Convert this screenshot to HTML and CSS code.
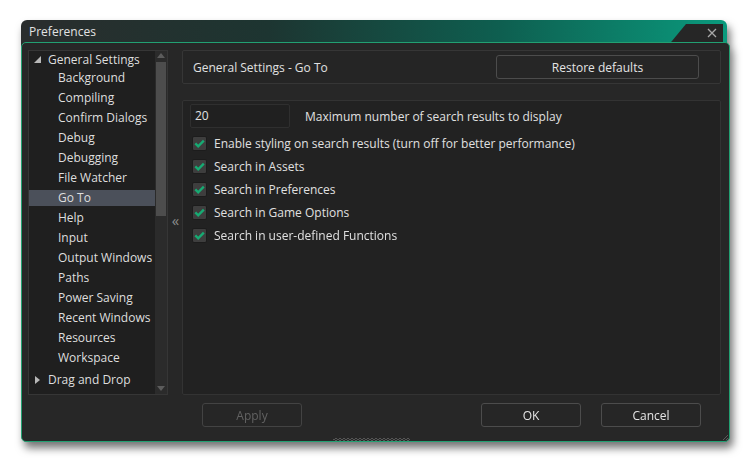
FILE: index.html
```html
<!DOCTYPE html>
<html>
<head>
<meta charset="utf-8">
<link rel="stylesheet" href="styles.css">
</head>
<body>
<div class="window">
  <div class="titlebar">
    <span class="title">Preferences</span>
    <div class="closetab">
      <svg class="close-x" width="10" height="10" viewBox="0 0 10 10"><path d="M1 1 L9 9 M9 1 L1 9" stroke="#a8a8a8" stroke-width="1.3" fill="none"/></svg>
    </div>
  </div>
  <div class="frame">
    <div class="main">
      <div class="tree">
        <ul class="tree-list">
          <li class="row top first"><span class="tri tri-open"></span>General Settings</li>
          <li class="row child">Background</li>
          <li class="row child">Compiling</li>
          <li class="row child">Confirm Dialogs</li>
          <li class="row child">Debug</li>
          <li class="row child">Debugging</li>
          <li class="row child">File Watcher</li>
          <li class="row child selected">Go To</li>
          <li class="row child">Help</li>
          <li class="row child">Input</li>
          <li class="row child">Output Windows</li>
          <li class="row child">Paths</li>
          <li class="row child">Power Saving</li>
          <li class="row child">Recent Windows</li>
          <li class="row child">Resources</li>
          <li class="row child">Workspace</li>
          <li class="row top last"><span class="tri tri-closed"></span>Drag and Drop</li>
        </ul>
        <div class="scrollbar">
          <span class="arrow arrow-up"></span>
          <div class="thumb"></div>
          <span class="arrow arrow-down"></span>
        </div>
      </div>
      <div class="collapse">«</div>
      <div class="content-col">
        <div class="header-box">
          <span class="header-title">General Settings - Go To</span>
          <button class="btn restore">Restore defaults</button>
        </div>
        <div class="settings-box">
          <div class="num-row">
            <div class="num-input">20</div>
            <span class="label">Maximum number of search results to display</span>
          </div>
          <div class="check-row"><span class="checkbox"><svg width="13" height="13" viewBox="0 0 13 13"><path d="M2.3 6.4 L5.2 9.3 L10.8 3.7" stroke="#17ab73" stroke-width="2.4" fill="none"/></svg></span>Enable styling on search results (turn off for better performance)</div>
          <div class="check-row"><span class="checkbox"><svg width="13" height="13" viewBox="0 0 13 13"><path d="M2.3 6.4 L5.2 9.3 L10.8 3.7" stroke="#17ab73" stroke-width="2.4" fill="none"/></svg></span>Search in Assets</div>
          <div class="check-row"><span class="checkbox"><svg width="13" height="13" viewBox="0 0 13 13"><path d="M2.3 6.4 L5.2 9.3 L10.8 3.7" stroke="#17ab73" stroke-width="2.4" fill="none"/></svg></span>Search in Preferences</div>
          <div class="check-row"><span class="checkbox"><svg width="13" height="13" viewBox="0 0 13 13"><path d="M2.3 6.4 L5.2 9.3 L10.8 3.7" stroke="#17ab73" stroke-width="2.4" fill="none"/></svg></span>Search in Game Options</div>
          <div class="check-row"><span class="checkbox"><svg width="13" height="13" viewBox="0 0 13 13"><path d="M2.3 6.4 L5.2 9.3 L10.8 3.7" stroke="#17ab73" stroke-width="2.4" fill="none"/></svg></span>Search in user-defined Functions</div>
        </div>
      </div>
    </div>
    <div class="footer">
      <button class="btn btn-disabled">Apply</button>
      <div class="spacer"></div>
      <button class="btn">OK</button>
      <button class="btn">Cancel</button>
    </div>
    <div class="bottom">
      <div class="grip"></div>
      <svg class="corner" width="8" height="8" viewBox="0 0 8 8"><path d="M7 2 L2 7 M7 5 L5 7" stroke="#5a5a5a" stroke-width="1" fill="none"/></svg>
    </div>
  </div>
</div>
</body>
</html>
```
FILE: styles.css
```css
* { box-sizing: border-box; }
html, body { margin: 0; padding: 0; background: #ffffff; }
html { height: 469px; }
body {
  min-height: 469px;
  padding: 20px 0 0 21px;
  font-family: "Open Sans", "Noto Sans", sans-serif;
  font-size: 12px;
  color: #dcdcdc;
}
.window {
  width: 709px;
  filter: drop-shadow(3px 6px 4px rgba(0,0,0,0.55));
}
.titlebar {
  width: 706px;
  height: 27px;
  border-radius: 6px 6px 0 0;
  background: linear-gradient(90deg, #2a2d2d 0%, #1d3531 35%, #0e5f50 68%, #0a9a7d 100%);
  display: flex;
  align-items: flex-start;
}
.title {
  padding: 1px 0 0 8px;
  height: 22px;
  line-height: 22px;
  font-size: 12px;
  color: #e2e2e2;
}
.closetab {
  margin-left: auto;
  margin-top: 4px;
  margin-right: 4px;
  width: 56px;
  height: 23px;
  background: #262626;
  clip-path: polygon(19px 0, 100% 0, 100% 100%, 0 100%);
  display: flex;
  justify-content: flex-end;
  padding: 4px 6px 0 0;
}
.close-x { display: block; }
.frame {
  position: relative;
  margin-top: -5px;
  width: 709px;
  height: 400px;
  background: #272727;
  border: 1px solid #22a072;
  border-radius: 5px;
  padding: 7px 8px 0 6px;
  display: flex;
  flex-direction: column;
}
.main {
  display: flex;
  height: 345px;
}
.tree {
  width: 140px;
  height: 345px;
  background: #1f1f1f;
  border: 1px solid #363636;
  display: flex;
}
.tree-list {
  list-style: none;
  margin: 0;
  padding: 0;
  width: 126px;
}
.row {
  height: 20px;
  line-height: 20px;
  white-space: nowrap;
  color: #dedede;
}
.row.first { height: 17px; line-height: 17px; }
.row.last { margin-top: 2px; }
.row.top { padding-left: 5px; display: flex; align-items: center; }
.row.child { padding-left: 29px; }
.row.selected {
  background: linear-gradient(#4b505a, #4b505a) 0 2px / 100% 16px no-repeat;
}
.tri { display: inline-block; width: 0; height: 0; }
.tri-open {
  border-left: 7px solid transparent;
  border-bottom: 7px solid #b8b8b8;
  margin-right: 7px;
  margin-top: -1px;
}
.tri-closed {
  border-left: 5px solid #b8b8b8;
  border-top: 4px solid transparent;
  border-bottom: 4px solid transparent;
  margin-left: 1px;
  margin-right: 8px;
}
.scrollbar {
  width: 12px;
  margin-left: auto;
  background: #2b2b2b;
  display: flex;
  flex-direction: column;
  align-items: center;
  padding-top: 2px;
}
.arrow { width: 0; height: 0; display: block; }
.arrow-up {
  border-left: 4px solid transparent;
  border-right: 4px solid transparent;
  border-bottom: 5px solid #5c5c5c;
}
.arrow-down {
  margin-top: auto;
  margin-bottom: 3px;
  border-left: 4px solid transparent;
  border-right: 4px solid transparent;
  border-top: 5px solid #5c5c5c;
}
.thumb {
  margin-top: 4px;
  width: 10px;
  height: 154px;
  background: #4d4d4d;
}
.collapse {
  width: 14px;
  text-align: center;
  color: #8c8c8c;
  font-size: 15px;
  padding-top: 160px;
  padding-left: 1px;
}
.content-col {
  width: 539px;
  display: flex;
  flex-direction: column;
  gap: 16px;
}
.header-box {
  height: 34px;
  background: #252525;
  border: 1px solid #363636;
  border-radius: 2px;
  display: flex;
  align-items: center;
  padding: 0 21px 0 10px;
}
.header-title { color: #e0e0e0; }
.btn {
  font-family: "Open Sans", "Noto Sans", sans-serif;
  font-size: 12px;
  color: #e4e4e4;
  background: #262626;
  border: 1px solid #4c4c4c;
  border-radius: 3px;
  height: 24px;
  width: 100px;
  padding: 0;
}
.restore { margin-left: auto; width: 203px; }
.settings-box {
  height: 295px;
  background: #222222;
  border: 1px solid #333333;
  border-radius: 2px;
  padding: 3px 0 0 7px;
}
.num-row {
  display: flex;
  align-items: center;
  margin-bottom: 4px;
}
.num-input {
  width: 100px;
  height: 24px;
  background: #202020;
  border: 1px solid #2f2f2f;
  border-radius: 2px;
  line-height: 22px;
  padding-left: 4px;
  color: #e0e0e0;
}
.label { margin-left: 15px; color: #e0e0e0; }
.check-row {
  height: 23px;
  display: flex;
  align-items: center;
  padding-left: 2px;
  color: #e0e0e0;
}
.checkbox {
  width: 15px;
  height: 15px;
  background: #3e3e3e;
  border: 1px solid #1c1c1c;
  border-radius: 2px;
  margin-right: 7px;
  display: flex;
  align-items: center;
  justify-content: center;
}
.checkbox svg { display: block; }
.footer {
  display: flex;
  margin-top: 8px;
  height: 24px;
  padding: 0 20px 0 174px;
  gap: 20px;
}
.spacer { flex: 1; }
.btn-disabled { color: #626262; border-color: #434343; }
.bottom {
  margin-top: auto;
  height: 11px;
  display: flex;
  justify-content: center;
  align-items: flex-end;
  margin-right: -8px;
  margin-left: -6px;
}
.grip {
  width: 77px;
  height: 3px;
  background: conic-gradient(#565656 25%, transparent 0 50%, #565656 0 75%, transparent 0) 0 0 / 4px 2px;
  margin-left: auto;
}
.corner { margin-left: auto; display: block; }
```
